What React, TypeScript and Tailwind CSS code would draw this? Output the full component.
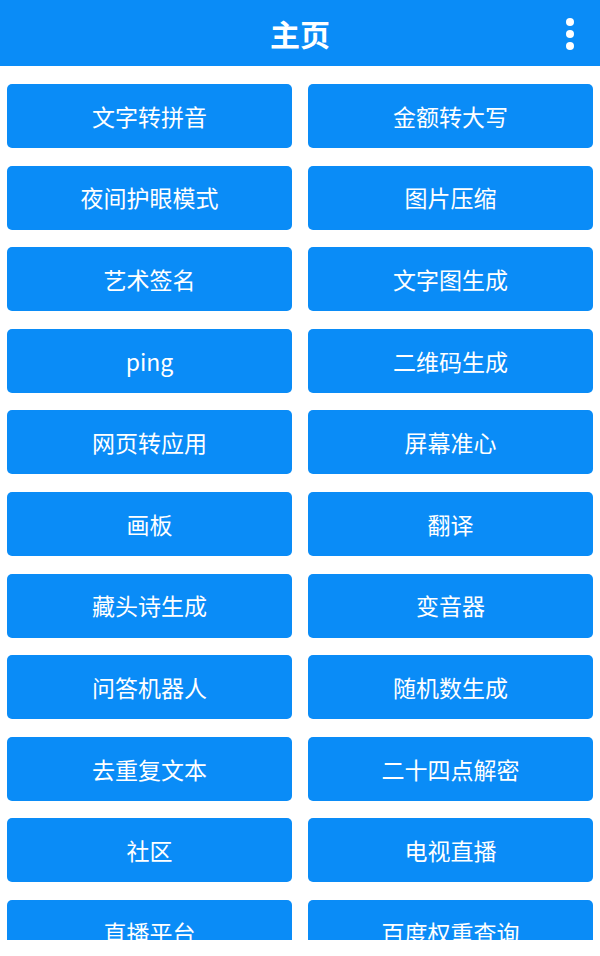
import React from "react";

const tools = [
  "文字转拼音", "金额转大写",
  "夜间护眼模式", "图片压缩",
  "艺术签名", "文字图生成",
  "ping", "二维码生成",
  "网页转应用", "屏幕准心",
  "画板", "翻译",
  "藏头诗生成", "变音器",
  "问答机器人", "随机数生成",
  "去重复文本", "二十四点解密",
  "社区", "电视直播",
  "直播平台", "百度权重查询",
];

export default function App() {
  return (
    <div
      className="w-[600px] h-[956px] bg-white flex flex-col overflow-hidden"
      style={{ fontFamily: '"Noto Sans CJK SC", Roboto, "Noto Sans", sans-serif' }}
    >
      <header className="h-[66px] shrink-0 bg-[#0a8cf7] flex items-center justify-center relative">
        <h1 className="text-[30px] font-bold text-white leading-none">主页</h1>
        <button className="absolute right-[20px] top-[17px] w-[20px] h-[34px] flex flex-col items-center justify-between py-[1px]">
          <span className="w-[8px] h-[8px] rounded-full bg-white" />
          <span className="w-[8px] h-[8px] rounded-full bg-white" />
          <span className="w-[8px] h-[8px] rounded-full bg-white" />
        </button>
      </header>
      <main className="h-[874px] shrink-0 overflow-hidden">
        <div className="grid grid-cols-2 gap-x-[16px] gap-y-[17.6px] px-[7px] pt-[18px]">
          {tools.map((t) => (
            <button
              key={t}
              className="h-[64px] rounded-[5px] bg-[#0a8cf7] text-white text-[23px] font-normal flex items-center justify-center"
            >
              {t}
            </button>
          ))}
        </div>
      </main>
    </div>
  );
}
